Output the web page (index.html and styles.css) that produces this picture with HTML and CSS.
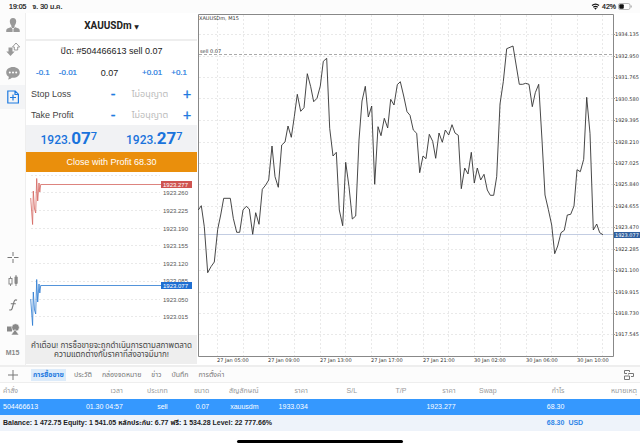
FILE: index.html
```html
<!DOCTYPE html>
<html lang="th">
<head>
<meta charset="utf-8">
<title>XAUUSDm, M15</title>
<meta name="viewport" content="width=device-width, initial-scale=1">
<link rel="stylesheet" href="styles.css">
</head>
<body>
<header class="status">
  <span class="clock">19:05</span>
  <span class="date">จ. 30 ม.ค.</span>
  <svg class="wifi" viewBox="0 0 9 7" aria-hidden="true"><path d="M1 2.6Q4.500-.3 8 2.600M2.300 4.200Q4.500 2.400 6.700 4.200" fill="none" stroke="#111" stroke-width="1.300"/><path d="M3.200 5.200Q4.500 4.300 5.800 5.200L4.500 6.700z" fill="#111"/></svg>
  <span class="level">42%</span>
  <svg class="battery" viewBox="0 0 15 7" aria-hidden="true"><rect x=".5" y=".5" width="11.500" height="6" rx="1.700" fill="#fff" stroke="#999" stroke-width=".7"/><rect x="1.300" y="1.300" width="4.500" height="4.400" rx="1" fill="#111"/><path d="M13.200 2.500v2" stroke="#999" stroke-width=".9"/></svg>
</header>

<main class="workspace">
  <nav class="rail" aria-label="เครื่องมือ">
    <button class="tool" aria-label="บัญชี"><svg viewBox="0 0 16 16"><path d="M8 1c2.200 0 3.300 1.500 3.200 3.600C11.100 6.500 10 8.300 9.600 8.800v1.100l4 1.700c.9.400 1.200 1.200 1.200 3.400H1.200c0-2.200.3-3 1.200-3.400l4-1.700V8.800C6 8.300 4.900 6.500 4.800 4.600 4.700 2.500 5.800 1 8 1z" fill="#999"/><path d="M6.300 10.300 8 12l1.700-1.700M8 12v3" stroke="#fff" stroke-width=".8" fill="none"/></svg></button>
    <button class="tool" aria-label="ราคา"><svg viewBox="0 0 16 16"><path d="M3.500 6.500h4v4h2.200L5.500 15 1.300 10.500h2.200z" fill="#999"/><path d="M9.300 9V6H7.500L11 2l3.700 4h-2v3z" fill="#fff" stroke="#999"/></svg></button>
    <button class="tool" aria-label="แชท"><svg viewBox="0 0 16 16"><path d="M8 2c3.900 0 6.800 2.300 6.800 5.400S11.900 12.800 8 12.800l-1.200-.1c-1.100 1-2.400 1.700-3.900 1.700.7-.8 1-1.700.9-2.700C2.100 10.700 1.200 9.200 1.200 7.400 1.200 4.300 4.100 2 8 2z" fill="#999"/><g fill="#fff"><circle cx="4.800" cy="7.400" r="1"/><circle cx="8" cy="7.400" r="1"/><circle cx="11.200" cy="7.400" r="1"/></g></svg></button>
    <button class="tool active" aria-label="คำสั่งใหม่"><svg viewBox="0 0 16 16"><path d="M2.800 2h7.400l3.200 3.200V14H2.800zM10 2v3.500h3.400M8 5.500v6M5 8.500h6" fill="none" stroke="#1f7ae0" stroke-width="1.200"/></svg></button>
    <button class="tool push" aria-label="กากบาท"><svg viewBox="0 0 16 16"><path d="M8 3v4M8 10v4M2.500 8.500H7M9 8.500h4.500" stroke="#777"/></svg></button>
    <button class="tool" aria-label="แท่งเทียน"><svg viewBox="0 0 16 16"><path d="M5.500 3.500v2M5.500 11v2M11 2v2M11 11v2" stroke="#888"/><rect x="4" y="5.500" width="3" height="5.500" fill="#fff" stroke="#888"/><rect x="9.500" y="3.500" width="3.200" height="7.500" rx="1" fill="#888"/></svg></button>
    <button class="tool" aria-label="อินดิเคเตอร์"><svg viewBox="0 0 16 16"><path d="M12 3.300c-1.700-1-2.700.1-3.100 1.800L7.300 11c-.4 1.700-1.400 2.600-3 1.700M5.800 6.800h5" fill="none" stroke="#777" stroke-width="1.100"/></svg></button>
    <button class="tool" aria-label="วัตถุ"><svg viewBox="0 0 16 16"><path d="M2 5.500h5v5H2z" fill="#888"/><circle cx="10.500" cy="6.500" r="3.800" fill="#888" stroke="#fff" stroke-width=".6"/><path d="M10 8.500 14 14H6z" fill="#888" stroke="#fff" stroke-width=".6"/></svg></button>
    <button class="tool period">M15</button>
  </nav>

  <section class="ticket">
    <button class="symbol" aria-haspopup="listbox">XAUUSDm <span class="caret">▼</span></button>
    <p class="order">ปิด: #504466613 sell 0.07</p>
    <div class="volume">
      <button class="step">-0.1</button>
      <button class="step">-0.01</button>
      <input class="lots" aria-label="ขนาด" value="0.07">
      <button class="step">+0.01</button>
      <button class="step">+0.1</button>
    </div>
    <div class="level-row">
      <label for="sl">Stop Loss</label>
      <button class="sign" aria-label="ลด Stop Loss">-</button>
      <input id="sl" placeholder="ไม่อนุญาต">
      <button class="sign" aria-label="เพิ่ม Stop Loss">+</button>
    </div>
    <div class="level-row">
      <label for="tp">Take Profit</label>
      <button class="sign" aria-label="ลด Take Profit">-</button>
      <input id="tp" placeholder="ไม่อนุญาต">
      <button class="sign" aria-label="เพิ่ม Take Profit">+</button>
    </div>
    <div class="quotes">
      <span class="quote">1923.<b>07</b><sup>7</sup></span>
      <span class="quote">1923.<b>27</b><sup>7</sup></span>
    </div>
    <button class="close">Close with Profit 68.30</button>
    <svg class="ticks" viewBox="26 172 171 163" role="img" aria-label="กราฟราคา">
      <path class="grid" d="M31 175.500H160M31 192.500H160M31 210.500H160M31 228.500H160M31 245.500H160M31 263.500H160M31 281.500H160M31 299.500H160M31 316.500H160"/>
      <g class="tick-labels">
        <text x="163" y="195">1923.260</text><text x="163" y="213">1923.225</text><text x="163" y="231">1923.190</text><text x="163" y="248">1923.155</text><text x="163" y="266">1923.120</text><text x="163" y="283">1923.085</text><text x="163" y="302">1923.050</text><text x="163" y="319">1923.015</text>
      </g>
      <path class="ask" d="M30.700 198 32.600 224.500 33.300 191 34.500 209 35.700 213 36.700 178.500 37.700 201 39 183 39.800 192 40.700 184.500H161"/>
      <path class="bid" d="M30.700 299 32.600 325.500 33.300 292 34.500 310 35.700 314 36.700 279.500 37.700 302 39 284 39.800 293 40.700 285.500H161"/>
      <rect x="161" y="181" width="31" height="7" fill="#cf5450"/><rect x="161" y="282" width="31" height="7" fill="#1f6fd2"/>
      <g class="tick-labels tag"><text x="163" y="187">1923.277</text><text x="163" y="288">1923.077</text></g>
    </svg>
    <p class="note">คำเตือน! การซื้อขายจะถูกดำเนินการตามสภาพตลาด<br>ความแตกต่างกับราคาที่ส่งอาจมีมาก!</p>
  </section>

  <section class="chart">
    <svg viewBox="197 13 443 352" role="img" aria-label="XAUUSDm, M15">
      <path class="grid" d="M217.500 15V356M243.500 15V356M268.500 15V356M294.500 15V356M320.500 15V356M345.500 15V356M371.500 15V356M397.500 15V356M423.500 15V356M448.500 15V356M474.500 15V356M500.500 15V356M526.500 15V356M551.500 15V356M577.500 15V356M602.500 15V356M199 34.500H613M199 56.500H613M199 77.500H613M199 98.500H613M199 120.500H613M199 142.500H613M199 163.500H613M199 184.500H613M199 206.500H613M199 227.500H613M199 249.500H613M199 270.500H613M199 292.500H613M199 313.500H613M199 334.500H613"/>
      <path d="M199 54.500H613" stroke="#aaa" stroke-dasharray="3 2"/>
      <path d="M199 234.500H613" stroke="#c3cde2"/>
      <path d="M198.500 14.500H613.500V356.500H198.500z" fill="none" stroke="#888"/>
      <path d="M613 34.500h2m-2 22h2m-2 21h2m-2 21h2m-2 22h2m-2 22h2m-2 21h2m-2 21h2m-2 22h2m-2 21h2m-2 22h2m-2 21h2m-2 22h2m-2 21h2m-2 21h2" stroke="#999"/>
      <polyline class="price" points="198.300,210 201.300,205.700 204.300,226.700 207.700,272.700 211,266.700 214.300,262 217.700,229.300 220.700,215 223.700,198.300 230.300,198.300 233.300,218.300 236.700,232.300 239.700,232.300 243,210 246.300,206.300 249.300,209 252.700,234.300 255.700,212.700 259,224.300 262.300,189.300 265.700,185 268.700,180 272,146 275,176.700 278.300,187.300 281.700,145 285,142 288,126 291.300,137.300 294.300,116.700 297.300,94.300 300.700,111.300 304,107.700 307.300,73.700 310.700,86.700 313.700,101.700 317,98.300 320.300,86 323.300,61.300 326.700,58.300 329.700,128.300 333,156 336.300,152.300 339.300,210 342.700,225.700 345.700,162.300 349,186.700 352.300,219 355.700,216 359,140 362,101 365.300,86.300 368.300,117 371.700,106 374.700,184.300 378,126.700 381,135.700 384.300,118.300 387.700,128 390.700,99.300 394,105 397.300,84.700 400.300,81.700 403.700,96 407,111.700 410,115.300 413.300,130 416.700,133.300 419.700,172.700 423,156 426,158.700 429.300,134.300 432.700,141.300 435.700,158.300 439,133 442.300,142.300 445.300,130 448.700,135 452,124.700 455,133 458.300,135.300 461.300,188.700 464.700,168 468,174 471.300,152.300 474.300,183 477.300,168 480.700,180 484,174.300 487.300,190 490.300,195.300 493.700,195.300 496.700,176.700 500,104 503.300,81.700 506.700,48.700 513,46 519.300,84.300 522.700,84.300 525.700,83.300 529,84.300 532.300,106.700 535.300,92.700 538.700,84.300 542,140 545,195 548.300,209.300 551.700,225 554.700,253.700 557.700,246 561,232.700 564.300,230.300 567.300,215 570.700,214.300 574,206 577,169.700 580.300,171.700 583.700,159.300 586.700,97.300 590,133.300 593.300,230 596.700,224 599.700,232.700 603,234.700"/>
      <rect x="614" y="232" width="26" height="6" fill="#2f5f9e"/>
      <g class="scale">
        <text x="199" y="20">XAUUSDm, M15</text><text x="200" y="53">sell 0.07</text>
        <text x="615" y="36">1934.135</text><text x="615" y="58">1932.950</text><text x="615" y="79">1931.765</text><text x="615" y="101">1930.580</text><text x="615" y="122">1929.395</text><text x="615" y="144">1928.210</text><text x="615" y="165">1927.025</text><text x="615" y="186">1925.840</text><text x="615" y="208">1924.655</text><text x="615" y="229">1923.470</text><text x="615" y="251">1922.285</text><text x="615" y="272">1921.100</text><text x="615" y="294">1919.915</text><text x="615" y="315">1918.730</text><text x="615" y="336">1917.545</text>
        <text class="now" x="615" y="237">1923.077</text>
        <text x="217" y="362">27 Jan 05:00</text><text x="268" y="362">27 Jan 09:00</text><text x="320" y="362">27 Jan 13:00</text><text x="371" y="362">27 Jan 17:00</text><text x="423" y="362">27 Jan 21:00</text><text x="474" y="362">30 Jan 02:00</text><text x="526" y="362">30 Jan 06:00</text><text x="577" y="362">30 Jan 10:00</text>
      </g>
    </svg>
  </section>
</main>

<nav class="tabs">
  <button class="add" aria-label="เพิ่ม"><svg viewBox="0 0 12 12"><path d="M6 1v10M1 6h10" stroke="#777"/></svg></button>
  <a class="tab current" href="#trade">การซื้อขาย</a>
  <a class="tab" href="#history">ประวัติ</a>
  <a class="tab" href="#mailbox">กล่องจดหมาย</a>
  <a class="tab" href="#news">ข่าว</a>
  <a class="tab" href="#journal">บันทึก</a>
  <a class="tab" href="#settings">การตั้งค่า</a>
  <button class="arrange" aria-label="จัดหน้าต่าง"><svg viewBox="0 0 12 12"><path d="M1.500 4.500v-3h5v1.500M1.500 4.500H4M1.500 7h5v3.500h-5zM5.500 5.500v-1h5v3H8" fill="none" stroke="#777"/></svg></button>
</nav>

<table class="trades" id="trade">
  <colgroup><col class="c-order"><col class="c-time"><col class="c-type"><col class="c-size"><col class="c-mid"><col class="c-mid"><col class="c-mid"><col class="c-mid"><col class="c-mid"><col class="c-swap"><col class="c-profit"><col></colgroup>
  <thead><tr><th>คำสั่ง</th><th>เวลา</th><th>ประเภท</th><th>ขนาด</th><th>สัญลักษณ์</th><th>ราคา</th><th>S/L</th><th>T/P</th><th>ราคา</th><th>Swap</th><th>กำไร</th><th>หมายเหตุ</th></tr></thead>
  <tbody><tr><td>504466613</td><td>01.30 04:57</td><td>sell</td><td>0.07</td><td>xauusdm</td><td>1933.034</td><td></td><td></td><td>1923.277</td><td></td><td>68.30</td><td></td></tr></tbody>
  <tfoot><tr><td colspan="10">Balance: 1 472.75 Equity: 1 541.05 หลักประกัน: 6.77 ฟรี: 1 534.28 Level: 22 777.66%</td><td class="sum">68.30</td><td class="sum unit">USD</td></tr></tfoot>
</table>
<footer class="home"><span class="bar"></span></footer>
</body>
</html>
```
FILE: styles.css
```css
* { box-sizing: border-box; }
body {
  margin: 0;
  min-height: 100vh;
  display: flex;
  flex-direction: column;
  background: #fff;
  color: #222;
  font: 7px/10px "Liberation Sans", "Noto Sans Thai", sans-serif;
}
button, input { font: inherit; color: inherit; border: 0; margin: 0; padding: 0; background: none; }
p { margin: 0; }
svg { display: block; }

.status { display: flex; align-items: center; height: 13px; padding: 0 7px 0 9px; background: #fcfcfc; color: #111; -webkit-text-stroke: 0.2px; }
.date { margin-left: 6px; }
.wifi { width: 9px; height: 7px; margin-left: auto; }
.level { margin: 0 2px; }
.battery { width: 15px; height: 7px; }

.workspace { display: grid; grid-template-columns: 26px 171px 1fr; background: #fff; }
.rail { display: flex; flex-direction: column; border-right: 1px solid #eee; background: #fcfcfc; }
.tool { display: flex; align-items: center; justify-content: center; height: 24px; }
.tool svg { width: 16px; height: 16px; }
.active { background: #f3f4f6; }
.push { margin-top: auto; }
.period { color: #888; font-weight: bold; }

.ticket { display: flex; flex-direction: column; font-size: 9px; }
.symbol { height: 28px; border-bottom: 2px solid #eee; font: bold 10px/12px Roboto, "Liberation Sans", sans-serif; }
.caret { font: 6px/12px "DejaVu Sans", sans-serif; }
.order { height: 21px; line-height: 21px; text-align: center; }
.volume { display: flex; align-items: center; height: 21px; padding: 0 10px; gap: 9px; color: #1f7ae0; font-size: 8px; }
.lots { flex: 1; min-width: 0; text-align: center; color: #222; font-size: 9px; }
.step { -webkit-text-stroke: 0.2px; }
.level-row { display: flex; align-items: center; height: 21px; padding: 0 4px 0 5px; color: #444; }
.level-row label { flex: 1; }
.level-row input { width: 62px; text-align: center; }
.level-row input::placeholder { color: #bbb; opacity: 1; }
.sign { width: 12px; color: #1f7ae0; font-size: 14px; -webkit-text-stroke: 0.4px; }
.quotes { display: flex; justify-content: space-around; height: 27px; background: #f1f2f4; color: #1973dc; font: 500 12px/27px Roboto, "Liberation Sans", sans-serif; }
.quote b { font-size: 17px; }
.quote sup { font-size: 11px; line-height: 1px; vertical-align: 4px; }
.close { height: 20px; background: #ea8f0c; color: #fff; }
.ticks { width: 100%; }
.grid { fill: none; stroke: #e9e9e9; stroke-dasharray: 2 2; }
.tick-labels { font-size: 6px; fill: #555; }
.tag { fill: #fff; }
.ask, .bid { fill: none; stroke: #d4645e; stroke-width: 0.8; }
.bid { stroke: #2878d0; }
.note { padding: 6px 0 5px; background: #eee; color: #444; text-align: center; font-size: 8px; line-height: 9px; white-space: nowrap; }

.chart svg { width: 100%; }
.price { fill: none; stroke: #333; stroke-width: 0.9; }
.scale { font-family: "DejaVu Sans", sans-serif; font-size: 5px; fill: #333; }
.scale .now { fill: #fff; }

.tabs { display: flex; align-items: center; gap: 6px; height: 18px; padding: 0 5px 0 7px; border-top: 2px solid #eee; border-bottom: 1px solid #eee; background: #fcfcfc; }
.tab { padding: 0 2px; line-height: 12px; color: #777; text-decoration: none; }
.current { background: #dcebfa; color: #1f7ae0; font-weight: bold; }
.add { margin-right: 6px; }
.add svg, .arrange svg { width: 12px; height: 12px; }
.arrange { margin-left: auto; }

.trades { width: 100%; table-layout: fixed; border-collapse: collapse; }
.trades th, .trades td { height: 16px; padding: 0; text-align: right; font-weight: normal; white-space: nowrap; }
.trades th { color: #999; }
.trades th:first-child, .trades td:first-child { padding-left: 3px; text-align: left; }
.trades th:last-child { padding-right: 3px; }
.trades tbody { background: #3598fe; color: #fff; }
.trades tfoot { background: #eef3fa; }
.trades tfoot td { font-weight: bold; }
.trades .sum { color: #2f86e8; }
.trades .unit { padding-left: 4px; text-align: left; }
.c-order { width: 9.4%; }
.c-time { width: 9.8%; }
.c-type { width: 7%; }
.c-size { width: 6.5%; }
.c-mid { width: 7.7%; }
.c-swap { width: 6.4%; }
.c-profit { width: 10.6%; }

.home { display: flex; justify-content: center; padding: 9px 0 5px; margin-top: auto; }
.bar { width: 26%; height: 3px; border-radius: 2px; background: #000; }
```
